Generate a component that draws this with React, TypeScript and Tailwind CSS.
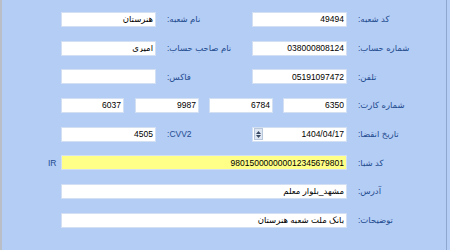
import React from 'react';

const FONT = { fontFamily: '"Liberation Sans", "DejaVu Sans", sans-serif' };

const Field: React.FC<{ value?: string; w: string; yellow?: boolean; spinner?: boolean }> = ({ value = '', w, yellow, spinner }) => (
  <div
    className={`${w} h-[15px] flex items-center border border-[#d3dff2] ${yellow ? 'bg-[#ffff88]' : 'bg-white'}`}
  >
    {spinner && (
      <div className="ml-[1px] w-[9px] h-[12px] bg-[#dfe7f3] border border-[#b9c7dc] flex flex-col items-center justify-center gap-[1px]">
        <svg width="5" height="3" viewBox="0 0 5 3"><path d="M0 3 L2.5 0 L5 3 Z" fill="#3b4b63" /></svg>
        <svg width="5" height="3" viewBox="0 0 5 3"><path d="M0 0 L2.5 3 L5 0 Z" fill="#3b4b63" /></svg>
      </div>
    )}
    <span dir="rtl" className="flex-1 text-right pr-[2px] text-[8.5px] leading-none text-black whitespace-nowrap overflow-hidden">
      {value}
    </span>
  </div>
);

const Label: React.FC<{ text: string }> = ({ text }) => (
  <span dir="rtl" className="ml-[11px] text-[8.5px] leading-none text-[#1f4b8e] whitespace-nowrap">
    {text}
  </span>
);

const Pair: React.FC<{ value?: string; label: string; spinner?: boolean }> = ({ value, label, spinner }) => (
  <div className="flex items-center w-[191px]">
    <Field value={value} w="w-[95px]" spinner={spinner} />
    <Label text={label} />
  </div>
);

export default function App() {
  return (
    <div
      style={FONT}
      className="w-[450px] h-[250px] bg-[#b3cdf5] border-l-2 border-[#b9bec7] flex overflow-hidden"
    >
      <div className="w-[445px] border-r border-[#8ea7cf] flex flex-col gap-[13.7px] pt-[12px] pl-[59px]">
        <div className="flex items-center h-[15px]">
          <Pair value="هنرستان" label="نام شعبه:" />
          <Pair value="49494" label="کد شعبه:" />
        </div>
        <div className="flex items-center h-[15px]">
          <Pair value="امیری" label="نام صاحب حساب:" />
          <Pair value="038000808124" label="شماره حساب:" />
        </div>
        <div className="flex items-center h-[15px]">
          <Pair value="" label="فاکس:" />
          <Pair value="05191097472" label="تلفن:" />
        </div>
        <div className="flex items-center h-[15px]">
          <Field value="6037" w="w-[63px]" />
          <div className="ml-[11px]"><Field value="9987" w="w-[64px]" /></div>
          <div className="ml-[10px]"><Field value="6784" w="w-[64px]" /></div>
          <div className="ml-[10px]"><Field value="6350" w="w-[64px]" /></div>
          <Label text="شماره کارت:" />
        </div>
        <div className="flex items-center h-[15px]">
          <Pair value="4505" label="CVV2:" />
          <Pair value="1404/04/17" label="تاریخ انقضا:" spinner />
        </div>
        <div className="flex items-center h-[15px]">
          <span className="-ml-[13px] w-[13px] text-[8.5px] leading-none text-[#1f4b8e]">IR</span>
          <Field value="980150000000012345679801" w="w-[286px]" yellow />
          <Label text="کد شبا:" />
        </div>
        <div className="flex items-center h-[15px]">
          <Field value="مشهد_بلوار معلم" w="w-[286px]" />
          <Label text="آدرس:" />
        </div>
        <div className="flex items-center h-[15px]">
          <Field value="بانک ملت شعبه هنرستان" w="w-[286px]" />
          <Label text="توضیحات:" />
        </div>
      </div>
    </div>
  );
}
